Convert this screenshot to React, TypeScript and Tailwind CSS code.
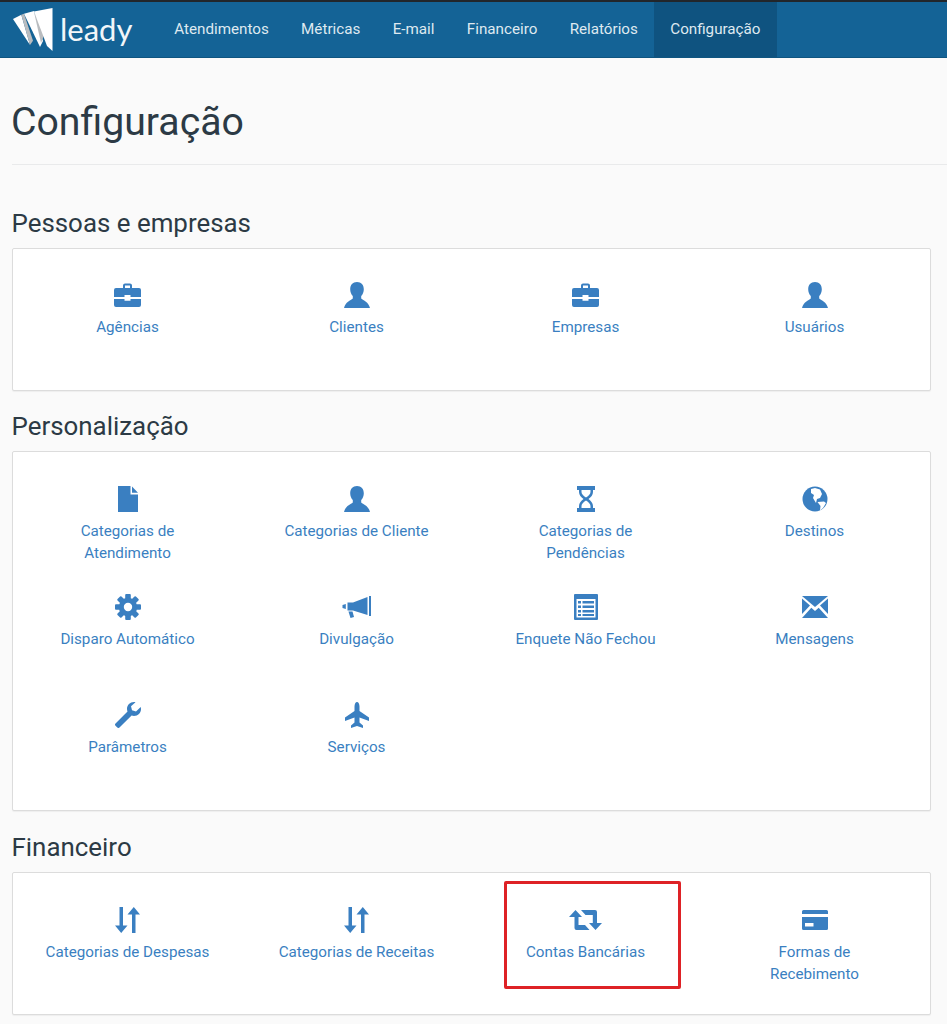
import type { ReactNode } from "react";

const fontStack = "font-['Roboto','Liberation_Sans',sans-serif]";

const navLinks = ["Atendimentos", "Métricas", "E-mail", "Financeiro", "Relatórios", "Configuração"];

const Svg = ({ w, h, children }: { w: number; h: number; children: ReactNode }) => (
  <svg width={w} height={h} viewBox={`0 0 ${w} ${h}`} fill="#3a7fc1">
    {children}
  </svg>
);

const icons: Record<string, ReactNode> = {
  briefcase: (
    <Svg w={27} h={24}>
      <path d="M9 5V2.500C9 1.200 10 .5 11 .5h5c1 0 2 .7 2 2V5h-2V2.600h-5V5z" />
      <path d="M2 5h23a2 2 0 0 1 2 2v7H16.500v-2h-6v2H0V7a2 2 0 0 1 2-2z" />
      <path d="M0 16h10.500v1.800h6V16H27v6a2 2 0 0 1-2 2H2a2 2 0 0 1-2-2z" />
    </Svg>
  ),
  user: (
    <Svg w={26} h={26}>
      <path d="M13 0c-4.300 0-6.800 3-6.800 7.200 0 2.800 1 5.200 2.600 6.800v2.500C6.500 18.500 1.500 19.800 0 26h26c-1.500-6.200-6.500-7.500-8.800-9.500V14c1.600-1.600 2.600-4 2.600-6.800C19.800 3 17.300 0 13 0z" />
    </Svg>
  ),
  file: (
    <Svg w={20} h={26}>
      <path d="M0 0h12.500v8.500H20V26H0z" />
      <path d="M14 .5l6 6.300h-6z" />
    </Svg>
  ),
  hourglass: (
    <Svg w={18} h={26}>
      <path d="M0 0h18v4H0zM0 22h18v4H0z" />
      <path
        fillRule="evenodd"
        d="M2 3h14v3c0 3-2 5-4.500 7 2.500 2 4.500 4 4.500 7v3H2v-3c0-3 2-5 4.500-7C4 11 2 9 2 6zM4.500 4v2c0 2 1.800 3.700 4.500 5.500C11.700 9.700 13.500 8 13.500 6V4zM9 14.500C6.300 16.300 4.500 18 4.500 20v2h9v-2c0-2-1.800-3.700-4.500-5.500z"
      />
    </Svg>
  ),
  globe: (
    <Svg w={26} h={26}>
      <circle cx="13" cy="13" r="12.500" />
      <path
        fill="#fff"
        d="M9 3l4-1 5 1.500 2 4.500-2 4-3 1-1 4-3-5 1-3-3-2zM15.500 16l6.500-.5 2 1.500-3 5-3 2.500.5-4.500z"
      />
    </Svg>
  ),
  cog: (
    <Svg w={26} h={26}>
      {[0, 45, 90, 135, 180, 225, 270, 315].map((angle) => (
        <rect key={angle} x="10.200" y="0" width="5.600" height="7" rx="1" transform={`rotate(${angle} 13 13)`} />
      ))}
      <circle cx="13" cy="13" r="6.700" fill="none" stroke="#3a7fc1" strokeWidth="5" />
    </Svg>
  ),
  bullhorn: (
    <Svg w={29} h={22}>
      <path d="M27 0h2v20h-2z" />
      <path d="M25.500 1v18L11 14.500H5.500v-8H11z" />
      <path d="M3.800 8v5L.5 12V9z" />
      <path d="M6.500 15.500h4l1.500 5.500-3.500 1z" />
    </Svg>
  ),
  list: (
    <Svg w={24} h={26}>
      <path
        fillRule="evenodd"
        d="M1 0h22a1 1 0 0 1 1 1v24a1 1 0 0 1-1 1H1a1 1 0 0 1-1-1V1a1 1 0 0 1 1-1zM2.500 5v18.500h19V5z"
      />
      <path d="M4 7h3v2.500H4zM8.500 7H20v2.500H8.500zM4 11.500h3V14H4zM8.500 11.500H20V14H8.500zM4 16h3v2.500H4zM8.500 16H20v2.500H8.500zM4 20h3v2H4zM8.500 20H20v2H8.500z" />
    </Svg>
  ),
  envelope: (
    <Svg w={26} h={22}>
      <path d="M0 0h26L13 11z" />
      <path d="M0 2.500L8 9.500 0 18zM26 2.500l-8 7 8 8.500z" />
      <path d="M0 22l9.300-10.300L13 15l3.700-3.300L26 22z" />
    </Svg>
  ),
  wrench: (
    <Svg w={26} h={26}>
      <path d="M19 0c-4 0-7 3-7 6.800 0 1 .2 1.800.5 2.600L.5 21.500c-.7.7-.7 1.500 0 2.200l1.800 1.800c.7.700 1.500.7 2.200 0l12.100-12c.8.300 1.500.5 2.400.5 4 0 7-3.200 7-7 0-.8-.1-1.500-.3-2l-4.700 4.400-4-1.200-1-4L20.500.2C20 .1 19.500 0 19 0z" />
    </Svg>
  ),
  plane: (
    <Svg w={24} h={26}>
      <path d="M12 0c1.400 0 2.500 2 2.500 4.500V9L24 15.500V19l-9.500-3.500v5l3.500 3V26l-6-2-6 2v-2.500l3.500-3v-5L0 19v-3.500L9.500 9V4.500C9.500 2 10.600 0 12 0z" />
    </Svg>
  ),
  sort: (
    <Svg w={25} h={26}>
      <path d="M4.500 0h3.500v18.500H12.500L6.200 26 0 18.500h4.500z" />
      <path d="M18.800 0L25 7.500h-4.500V26H17V7.500h-4.500z" />
    </Svg>
  ),
  retweet: (
    <Svg w={33} h={20}>
      <path d="M6.500 0L13 7H9.500v8H16l4.500 5H7.500a2 2 0 0 1-2-2V7H0z" />
      <path d="M12 0h14a2 2 0 0 1 2 2v11h5l-6.500 7-6.500-7h3.800V5h-7.300z" />
    </Svg>
  ),
  card: (
    <Svg w={26} h={20}>
      <path d="M1.500 0h23A1.500 1.500 0 0 1 26 1.500V4H0V1.500A1.500 1.500 0 0 1 1.500 0z" />
      <path
        fillRule="evenodd"
        d="M0 7h26v11.500a1.500 1.500 0 0 1-1.500 1.500h-23A1.500 1.500 0 0 1 0 18.500zM3 13v3.500h8.500V13z"
      />
    </Svg>
  ),
};

type Item = { icon: string; label: string; marked?: boolean };

const sections: { title: string; sectionClass: string; bodyClass: string; items: Item[] }[] = [
  {
    title: "Pessoas e empresas",
    sectionClass: "mt-[42px]",
    bodyClass: "pt-[33px]",
    items: [
      { icon: "briefcase", label: "Agências" },
      { icon: "user", label: "Clientes" },
      { icon: "briefcase", label: "Empresas" },
      { icon: "user", label: "Usuários" },
    ],
  },
  {
    title: "Personalização",
    sectionClass: "mt-[19px]",
    bodyClass: "pt-[34px]",
    items: [
      { icon: "file", label: "Categorias de\nAtendimento" },
      { icon: "user", label: "Categorias de Cliente" },
      { icon: "hourglass", label: "Categorias de\nPendências" },
      { icon: "globe", label: "Destinos" },
      { icon: "cog", label: "Disparo Automático" },
      { icon: "bullhorn", label: "Divulgação" },
      { icon: "list", label: "Enquete Não Fechou" },
      { icon: "envelope", label: "Mensagens" },
      { icon: "wrench", label: "Parâmetros" },
      { icon: "plane", label: "Serviços" },
    ],
  },
  {
    title: "Financeiro",
    sectionClass: "mt-[20px]",
    bodyClass: "h-[143px] pt-[34px]",
    items: [
      { icon: "sort", label: "Categorias de Despesas" },
      { icon: "sort", label: "Categorias de Receitas" },
      { icon: "retweet", label: "Contas Bancárias", marked: true },
      { icon: "card", label: "Formas de\nRecebimento" },
    ],
  },
];

const Logo = () => (
  <svg width="40" height="43" viewBox="0 0 40 43">
    <path d="M0 11L8.300 6.700 17 37z" fill="#fff" />
    <path d="M8.300 6.700L11 5.700l9 27-3 4.300z" fill="#b9bcbf" />
    <path d="M11 5.700L21 3l9 30-3 6z" fill="#fff" />
    <path d="M21 4l11 21-4 10z" fill="#b9bcbf" />
    <path d="M21 3.500L39.500 0v43L34 38z" fill="#fff" />
  </svg>
);

export default function App() {
  return (
    <div className={`min-h-[1024px] bg-[#fafafa] ${fontStack}`}>
      <header className="flex h-[58px] items-stretch border-t-2 border-b border-t-[#22262b] border-b-[#0f5580] bg-[#146396]">
        <a className="flex w-[158px] items-center gap-[7px] pl-[13px] text-[#f2f6f9]">
          <Logo />
          <span className="font-['Lato',sans-serif] text-[31px] font-normal leading-none">leady</span>
        </a>
        <nav className="flex">
          {navLinks.map((link) => (
            <a
              key={link}
              className={`flex items-center px-[16.2px] text-[15.2px] text-[#dfe9f0] ${
                link === "Configuração" ? "bg-[#0f5380]" : ""
              }`}
            >
              {link}
            </a>
          ))}
        </nav>
      </header>

      <main className="pl-3">
        <div className="mt-[39px] border-b border-[#e9eaeb] pb-[17px]">
          <h1 className="-ml-[1px] text-[39.2px] leading-[50px] text-[#2c3a45]">Configuração</h1>
        </div>

        <div className="pr-4">
          {sections.map((section) => (
            <section key={section.title} className={section.sectionClass}>
              <h2 className="-ml-[0.5px] text-[25.9px] leading-[33px] text-[#2c3a45]">{section.title}</h2>
              <div
                className={`mt-[8px] grid grid-cols-4 auto-rows-[108px] rounded-[2px] border border-[#dcdcdc] bg-white pr-[1px] shadow-[0_1px_1px_rgba(0,0,0,0.05)] ${section.bodyClass}`}
              >
                {section.items.map((item) => (
                  <a key={item.label} className="relative flex flex-col items-center text-center text-[#3a7fc1]">
                    <span className="flex h-[26px] items-center justify-center">{icons[item.icon]}</span>
                    <span className="mt-[8px] whitespace-pre-line text-[15.2px] leading-[22px]">{item.label}</span>
                    {item.marked && (
                      <span className="absolute left-[33px] top-[-26px] h-[108px] w-[177px] rounded-[2px] border-[3px] border-[#de2226]" />
                    )}
                  </a>
                ))}
              </div>
            </section>
          ))}
        </div>
      </main>
    </div>
  );
}
